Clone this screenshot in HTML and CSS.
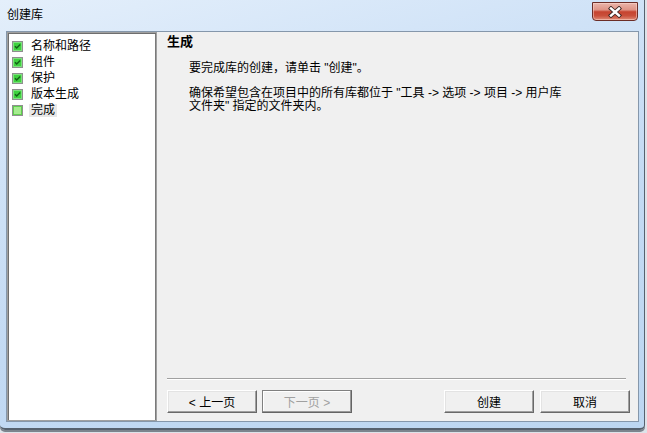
FILE: index.html
```html
<!DOCTYPE html>
<html lang="zh-CN">
<head>
<meta charset="utf-8">
<title>创建库</title>
<link rel="stylesheet" href="styles.css">
</head>
<body>
<div class="window">
  <div class="titlebar">
    <span class="title">创建库</span>
    <button class="close" aria-label="关闭">
      <svg width="16" height="12" viewBox="0 0 16 12">
        <path d="M4 2.5 L12 9.5 M12 2.5 L4 9.5" fill="none" stroke="#3b2422" stroke-width="4.2" stroke-linecap="square"/>
        <path d="M4 2.5 L12 9.5 M12 2.5 L4 9.5" fill="none" stroke="#ffffff" stroke-width="2.4" stroke-linecap="square"/>
      </svg>
    </button>
  </div>
  <div class="client">
    <ul class="steps">
      <li class="step">
        <svg class="cb" width="11" height="11" viewBox="0 0 11 11"><rect x="0.5" y="0.5" width="10" height="10" fill="#f4f4f4" stroke="#8f8f8f"/><rect x="1.5" y="1.5" width="8" height="8" fill="#3fd23f" stroke="#7fe07f"/><path d="M3 5.2 L4.7 7 L8.2 3.4" fill="none" stroke="#146118" stroke-width="1.5"/></svg>
        <span class="label">名称和路径</span>
      </li>
      <li class="step">
        <svg class="cb" width="11" height="11" viewBox="0 0 11 11"><rect x="0.5" y="0.5" width="10" height="10" fill="#f4f4f4" stroke="#8f8f8f"/><rect x="1.5" y="1.5" width="8" height="8" fill="#3fd23f" stroke="#7fe07f"/><path d="M3 5.2 L4.7 7 L8.2 3.4" fill="none" stroke="#146118" stroke-width="1.5"/></svg>
        <span class="label">组件</span>
      </li>
      <li class="step">
        <svg class="cb" width="11" height="11" viewBox="0 0 11 11"><rect x="0.5" y="0.5" width="10" height="10" fill="#f4f4f4" stroke="#8f8f8f"/><rect x="1.5" y="1.5" width="8" height="8" fill="#3fd23f" stroke="#7fe07f"/><path d="M3 5.2 L4.7 7 L8.2 3.4" fill="none" stroke="#146118" stroke-width="1.5"/></svg>
        <span class="label">保护</span>
      </li>
      <li class="step">
        <svg class="cb" width="11" height="11" viewBox="0 0 11 11"><rect x="0.5" y="0.5" width="10" height="10" fill="#f4f4f4" stroke="#8f8f8f"/><rect x="1.5" y="1.5" width="8" height="8" fill="#3fd23f" stroke="#7fe07f"/><path d="M3 5.2 L4.7 7 L8.2 3.4" fill="none" stroke="#146118" stroke-width="1.5"/></svg>
        <span class="label">版本生成</span>
      </li>
      <li class="step">
        <svg class="cb" width="11" height="11" viewBox="0 0 11 11"><rect x="0.5" y="0.5" width="10" height="10" fill="#f4f4f4" stroke="#8f8f8f"/><rect x="1.5" y="1.5" width="8" height="8" fill="#a6ec8f" stroke="#5fcf4f"/></svg>
        <span class="label selected">完成</span>
      </li>
    </ul>
    <div class="main">
      <div class="heading">生成</div>
      <div class="body">
        <p class="para p1">要完成库的创建，请单击 "创建"。</p>
        <p class="para p2">确保希望包含在项目中的所有库都位于 "工具 -&gt; 选项 -&gt; 项目 -&gt; 用户库<br>文件夹" 指定的文件夹内。</p>
      </div>
      <div class="spacer"></div>
      <div class="sep"></div>
      <div class="buttons">
        <button class="btn">&lt; 上一页</button>
        <button class="btn next" disabled>下一页 &gt;</button>
        <span class="grow"></span>
        <button class="btn">创建</button>
        <button class="btn cancel">取消</button>
      </div>
    </div>
  </div>
</div>
</body>
</html>
```

FILE: styles.css
```css
* {
  box-sizing: border-box;
}

html, body {
  margin: 0;
  padding: 0;
}

body {
  width: 647px;
  height: 433px;
  overflow: hidden;
  background: #dde3e9;
  font-family: "Liberation Sans", "Noto Sans CJK SC", sans-serif;
  font-size: 12px;
  color: #000;
}

.window {
  width: 645px;
  height: 430px;
  display: flex;
  flex-direction: column;
  padding: 0 5px 6px 6px;
  background: linear-gradient(165deg, #e4effb 0%, #cfe2f7 30%, #c3daf3 60%, #bcd6f1 100%);
  border-right: 1px solid #56616e;
  border-bottom: 2px solid #56616e;
  border-bottom-right-radius: 5px;
  border-bottom-left-radius: 5px;
  box-shadow: 0 2px 0 #7c848d;
}

.titlebar {
  height: 31px;
  flex: none;
  display: flex;
  align-items: flex-start;
  padding-left: 1px;
}

.title {
  margin-top: 7px;
  line-height: 16px;
}

.close {
  margin-left: auto;
  margin-top: 2px;
  margin-right: 1px;
  width: 46px;
  height: 19px;
  padding: 0;
  border: 1px solid #6b2d27;
  border-radius: 0 0 4px 4px;
  background: linear-gradient(#eab5ab 0%, #df9486 40%, #c6432f 52%, #c9503b 75%, #e08b77 100%);
  display: flex;
  align-items: center;
  justify-content: center;
  box-shadow: inset 0 0 0 1px rgba(255, 220, 210, 0.5);
}

.close svg {
  display: block;
}

.client {
  flex: 1;
  display: flex;
  border: 1px solid #8597ab;
  background: #f0f0f0;
  min-height: 0;
}

.steps {
  width: 150px;
  flex: none;
  margin: 0;
  padding: 5px 0 0 4px;
  list-style: none;
  background: #fff;
  border: 1px solid #a0a0a0;
  box-shadow: inset 1px 1px 0 #6e6e6e, inset -1px 0 0 #7a7a7a;
}

.step {
  height: 16px;
  display: flex;
  align-items: center;
}

.cb {
  flex: none;
  display: block;
}

.label {
  margin-left: 6px;
  padding: 0 2px;
  line-height: 13px;
}

.label.selected {
  background: #e8e8e8;
}

.main {
  flex: 1;
  display: flex;
  flex-direction: column;
  padding: 2px 8px 8px 10px;
  min-width: 0;
}

.heading {
  line-height: 16px;
  font-size: 13px;
  font-weight: bold;
}

.body {
  margin-left: 22px;
}

.para {
  margin: 12px 0 0 0;
  line-height: 13px;
}

.spacer {
  flex: 1;
}

.sep {
  height: 2px;
  border-top: 1px solid #a0a0a0;
  border-bottom: 1px solid #ffffff;
  margin-right: 4px;
}

.buttons {
  display: flex;
  margin-top: 10px;
}

.grow {
  flex: 1;
}

.btn {
  width: 90px;
  height: 23px;
  padding: 0;
  font-family: inherit;
  font-size: 12px;
  color: #000;
  background: #f0f0f0;
  border: 1px solid;
  border-color: #ffffff #696969 #696969 #ffffff;
  box-shadow: inset -1px -1px 0 #a0a0a0, inset 1px 1px 0 #e3e3e3;
}

.btn.next {
  margin-left: 5px;
  color: #a0a0a0;
  border-color: #808080 #646464 #646464 #808080;
  box-shadow: inset -1px -1px 0 #9a9a9a, inset 1px 1px 0 #ffffff;
}

.btn.cancel {
  margin-left: 6px;
}
```
